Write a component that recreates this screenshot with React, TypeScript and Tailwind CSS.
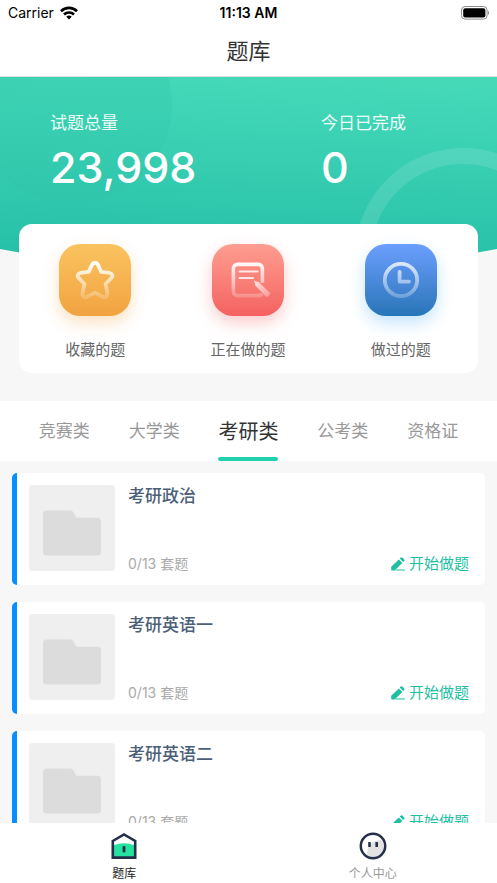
import { useState } from 'react'
import type { ReactNode } from 'react'

const categories = ['竞赛类', '大学类', '考研类', '公考类', '资格证']

const papers = [
  { id: 1, name: '考研政治', done: 0, total: 13 },
  { id: 2, name: '考研英语一', done: 0, total: 13 },
  { id: 3, name: '考研英语二', done: 0, total: 13 },
]

function StatusBar() {
  return (
    <div className="grid h-[26px] shrink-0 grid-cols-3 items-center bg-white px-2 text-sm text-black">
      <div className="flex items-center gap-1.5">
        <span>Carrier</span>
        <svg width="18" height="14" viewBox="0 0 18 14" fill="none" stroke="#000" strokeWidth="2.6">
          <path d="M1 5.2a11.4 11.4 0 0 1 16 0" />
          <path d="M4 8.5a7.1 7.1 0 0 1 10 0" />
          <path d="M9 13.5 6.3 10.8a3.9 3.9 0 0 1 5.4 0z" fill="#000" stroke="none" />
        </svg>
      </div>
      <span className="text-center font-semibold">11:13 AM</span>
      <svg className="justify-self-end" width="29" height="14" viewBox="0 0 29 14">
        <rect x="1.5" y="0.5" width="25.6" height="12.6" rx="3.6" fill="none" stroke="#8c8c8c" />
        <rect x="3.2" y="2.2" width="22.2" height="9.2" rx="2" fill="#000" />
        <path d="M28 4.8c1.4.6 1.4 3.4 0 4z" fill="#8c8c8c" />
      </svg>
    </div>
  )
}

function HeroBackground() {
  return (
    <div className="absolute inset-x-0 top-0 h-[196px] overflow-hidden">
      <svg className="absolute inset-0 h-full w-full" viewBox="0 0 497 196" preserveAspectRatio="none">
        <defs>
          <linearGradient id="hero" x1="0.55" y1="0" x2="0.45" y2="1">
            <stop offset="0" stopColor="#45d9b8" />
            <stop offset="1" stopColor="#24bfa8" />
          </linearGradient>
        </defs>
        <path d="M0 0H497V172Q248 219 0 172Z" fill="url(#hero)" />
      </svg>
      <div className="absolute -top-[73px] -left-7 size-[200px] rounded-full bg-linear-to-b from-[#20b59c]/20 to-[#20b59c]/8" />
      <div className="absolute top-[71px] -right-[74px] size-[216px] rounded-full border-16 border-white/12" />
    </div>
  )
}

function StarIcon() {
  return (
    <svg width="40" height="40" viewBox="0 0 40 40" fill="none">
      <defs>
        <linearGradient id="star" x1="0" y1="0" x2="0" y2="1">
          <stop offset="0" stopColor="#fff" />
          <stop offset="1" stopColor="#fff" stopOpacity="0.2" />
        </linearGradient>
      </defs>
      <path
        d="M17.2 4.4C18.4 2.2 21.6 2.2 22.8 4.4L26.2 11.8L34.2 12.8C37.4 13.4 38.4 16.2 36.2 18.2L30.6 24L32.4 33.2C33 36.6 30.4 38.2 27.6 36.8L20 32.8L12.4 36.8C9.6 38.2 7 36.6 7.6 33.2L9.4 24L3.8 18.2C1.6 16.2 2.6 13.4 5.8 12.8L13.8 11.8Z"
        stroke="url(#star)"
        strokeWidth="3.8"
      />
    </svg>
  )
}

function PaperIcon() {
  return (
    <svg width="40" height="40" viewBox="0 0 40 40" fill="none" overflow="visible">
      <defs>
        <linearGradient id="paper" gradientUnits="userSpaceOnUse" x1="0" y1="3" x2="0" y2="37">
          <stop offset="0" stopColor="#fff" stopOpacity="0.95" />
          <stop offset="1" stopColor="#fff" stopOpacity="0.2" />
        </linearGradient>
        <linearGradient id="paperPen" gradientUnits="userSpaceOnUse" x1="26" y1="20" x2="40" y2="36">
          <stop offset="0" stopColor="#fff" stopOpacity="0.8" />
          <stop offset="1" stopColor="#fff" stopOpacity="0.3" />
        </linearGradient>
      </defs>
      <path
        d="M34.4 23V8.4A4 4 0 0 0 30.4 4.4H9.4A4 4 0 0 0 5.4 8.4V31.6A4 4 0 0 0 9.4 35.6H30.4Q33 35.6 34 33.4"
        stroke="url(#paper)"
        strokeWidth="3.6"
      />
      <path d="M11.5 11.5H29.5M11.5 18H25" stroke="#fff" strokeOpacity="0.8" strokeWidth="2.2" strokeLinecap="round" />
      <path d="M26 20.4L30.6 22L42.6 33.6L39 37.4L27.4 25.8Z" fill="url(#paperPen)" />
    </svg>
  )
}

function ClockIcon() {
  return (
    <svg width="40" height="40" viewBox="0 0 40 40" fill="none">
      <defs>
        <linearGradient id="clock" gradientUnits="userSpaceOnUse" x1="0" y1="2" x2="0" y2="38">
          <stop offset="0" stopColor="#fff" stopOpacity="0.8" />
          <stop offset="1" stopColor="#fff" stopOpacity="0.25" />
        </linearGradient>
      </defs>
      <circle cx="20" cy="20" r="16.2" stroke="url(#clock)" strokeWidth="3.8" />
      <path d="M18.6 12V21.6H28" stroke="url(#clock)" strokeWidth="3.8" strokeLinecap="round" strokeLinejoin="round" />
    </svg>
  )
}

function Shortcut({ label, tile, children }: { label: string; tile: string; children: ReactNode }) {
  return (
    <a href="#" className="flex flex-1 flex-col items-center gap-[22px] text-[15px] leading-6 text-[#666]">
      <span className={`flex size-[72px] items-center justify-center rounded-[21px] ${tile}`}>{children}</span>
      {label}
    </a>
  )
}

function FolderIcon() {
  return (
    <div className="flex size-[86px] shrink-0 items-end justify-center rounded bg-[#efefef] pb-[15px]">
      <svg width="58" height="46" viewBox="0 0 58 46">
        <path
          d="M3.5 0.5H27C29 0.5 29.8 1.2 30.8 3L33.3 7.7H54.5A3.5 3.5 0 0 1 58 11.2V42A3.5 3.5 0 0 1 54.5 45.5H3.5A3.5 3.5 0 0 1 0 42V4A3.5 3.5 0 0 1 3.5 0.5Z"
          fill="#dcdcdc"
        />
      </svg>
    </div>
  )
}

function PencilIcon() {
  return (
    <svg width="14" height="14" viewBox="0 0 14 14" fill="#1fbfa3">
      <path d="M0.2 9.8L7.8 2.4L11.3 5.9L3.7 13.4H0.8Q0.2 13.4 0.2 12.8Z" />
      <path d="M8.7 1.6L9.8 0.6Q10.8 0 11.6 0.7L13.2 2.4Q14 3.2 13.2 4.1L12.1 5.1Z" />
      <path d="M4.5 12.4H13.9V13.4H4.5Z" />
    </svg>
  )
}

function HomeIcon() {
  return (
    <svg width="28" height="28" viewBox="0 0 28 28">
      <path d="M3 13.6Q14 8.8 25 13.6V25H3Z" fill="#25e2a0" />
      <path d="M2.8 9L14 2.4L25.2 9V25.6H2.8Z" fill="none" stroke="#232f4b" strokeWidth="2.6" />
      <rect x="12.6" y="14" width="2.8" height="6.4" rx="1" fill="#232f4b" />
    </svg>
  )
}

function ProfileIcon() {
  return (
    <svg width="28" height="28" viewBox="0 0 28 28">
      <path d="M8 24C7.5 15 11.5 8.5 22 8C25 11 25.5 17 22.5 21.5C18.5 26 12 26.5 8 24Z" fill="#e2e2e2" />
      <circle cx="14" cy="14" r="12.2" fill="none" stroke="#232f4b" strokeWidth="2.5" />
      <rect x="9.2" y="10" width="2.6" height="5" rx="0.6" fill="#232f4b" />
      <rect x="16.4" y="10" width="2.6" height="5" rx="0.6" fill="#232f4b" />
    </svg>
  )
}

export default function App() {
  const [active, setActive] = useState('考研类')

  return (
    <div className="flex h-screen flex-col bg-[#f7f7f7] font-['Inter','Noto_Sans_CJK_SC',sans-serif]">
      <StatusBar />
      <header className="flex h-[51px] shrink-0 items-center justify-center border-b border-[#dedede] bg-white">
        <h1 className="text-[22px] leading-8 text-[#333]">题库</h1>
      </header>

      <main className="min-h-0 flex-1 overflow-y-auto [scrollbar-width:none]">
        <section className="relative">
          <HeroBackground />
          <div className="relative pt-[34px]">
            <dl className="flex justify-between pr-[91px] pl-[50px] text-white">
              <div>
                <dt className="text-[17px] leading-6 text-white/90">试题总量</dt>
                <dd className="mt-[7px] text-[43px] leading-[50px] font-medium">23,998</dd>
              </div>
              <div>
                <dt className="text-[17px] leading-6 text-white/90">今日已完成</dt>
                <dd className="mt-[7px] text-[43px] leading-[50px] font-medium">0</dd>
              </div>
            </dl>
            <div className="mx-[19px] mt-8 flex rounded-[13px] bg-white pt-5 pr-px pb-[11px]">
              <Shortcut label="收藏的题" tile="bg-linear-to-b from-[#fac35f] to-[#f1a340] shadow-[0_7px_16px_#f1a34050]">
                <StarIcon />
              </Shortcut>
              <Shortcut label="正在做的题" tile="bg-linear-to-b from-[#fd9d91] to-[#f46160] shadow-[0_7px_16px_#f4616050]">
                <PaperIcon />
              </Shortcut>
              <Shortcut label="做过的题" tile="bg-linear-to-b from-[#6b9fff] to-[#2675b8] shadow-[0_7px_16px_#47a8f850]">
                <ClockIcon />
              </Shortcut>
            </div>
          </div>
        </section>

        <nav className="mt-7 flex h-[60px] justify-evenly bg-white">
          {categories.map((name) => (
            <button
              key={name}
              type="button"
              onClick={() => setActive(name)}
              className={
                name === active
                  ? 'relative pt-0.5 text-[20px] text-[#333]'
                  : 'relative pt-0.5 text-[17px] text-[#999]'
              }
            >
              {name}
              {name === active && <span className="absolute inset-x-0 bottom-0 h-1 rounded-full bg-[#20d1b0]" />}
            </button>
          ))}
        </nav>

        <ul className="flex flex-col gap-[17px] p-3">
          {papers.map((paper) => (
            <li
              key={paper.id}
              className="relative flex gap-[13px] overflow-hidden rounded-[5px] bg-white pt-3 pr-4 pb-[14px] pl-[17px]"
            >
              <span className="absolute inset-y-0 left-0 w-[5px] bg-[#078eff]" />
              <FolderIcon />
              <div className="flex min-w-0 flex-1 flex-col justify-between">
                <h2 className="text-[17px] leading-[22px] font-medium text-[#4b6078]">{paper.name}</h2>
                <div className="flex h-[14px] items-center justify-between">
                  <span className="text-sm text-[#aaa]">
                    {paper.done}/{paper.total} 套题
                  </span>
                  <button type="button" className="flex items-center gap-1 text-[15px] text-[#1fbfa3]">
                    <PencilIcon />
                    开始做题
                  </button>
                </div>
              </div>
            </li>
          ))}
        </ul>
      </main>

      <nav className="flex h-[60px] shrink-0 bg-white pt-[9px] text-xs">
        <a href="#" className="flex flex-1 flex-col items-center gap-1.5 text-[#222]">
          <HomeIcon />
          题库
        </a>
        <a href="#" className="flex flex-1 flex-col items-center gap-1.5 text-[#999]">
          <ProfileIcon />
          个人中心
        </a>
      </nav>
    </div>
  )
}
